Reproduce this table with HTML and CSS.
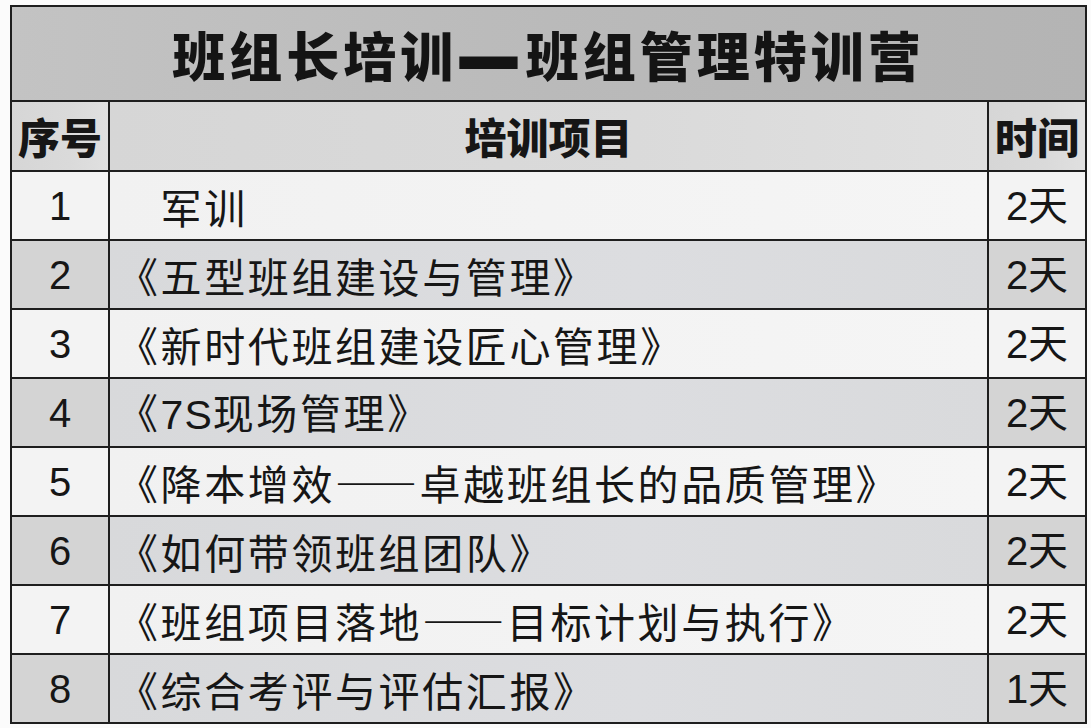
FILE: index.html
```html
<!DOCTYPE html>
<html lang="zh-CN">
<head>
<meta charset="utf-8">
<title>班组长培训—班组管理特训营</title>
<link rel="stylesheet" href="styles.css">
</head>
<body>
<table class="plan">
  <colgroup>
    <col class="c-no">
    <col class="c-item">
    <col class="c-time">
  </colgroup>
  <thead>
    <tr class="title-row"><th colspan="3" class="title">班组长培训<span class="dash">—</span>班组管理特训营</th></tr>
    <tr class="head-row">
      <th class="h-no">序号</th>
      <th class="h-item">培训项目</th>
      <th class="h-time">时间</th>
    </tr>
  </thead>
  <tbody>
    <tr class="light"><td class="no">1</td><td class="item">　军训</td><td class="time">2天</td></tr>
    <tr class="dark"><td class="no">2</td><td class="item">《五型班组建设与管理》</td><td class="time">2天</td></tr>
    <tr class="light"><td class="no">3</td><td class="item">《新时代班组建设匠心管理》</td><td class="time">2天</td></tr>
    <tr class="dark"><td class="no">4</td><td class="item">《<span class="latin">7S</span>现场管理》</td><td class="time">2天</td></tr>
    <tr class="light"><td class="no">5</td><td class="item">《降本增效——卓越班组长的品质管理》</td><td class="time">2天</td></tr>
    <tr class="dark"><td class="no">6</td><td class="item">《如何带领班组团队》</td><td class="time">2天</td></tr>
    <tr class="light"><td class="no">7</td><td class="item">《班组项目落地——目标计划与执行》</td><td class="time">2天</td></tr>
    <tr class="dark"><td class="no">8</td><td class="item">《综合考评与评估汇报》</td><td class="time">1天</td></tr>
  </tbody>
</table>
</body>
</html>
```

FILE: styles.css
```css
html, body {
  margin: 0;
  padding: 0;
  background: #fbfbfb;
}

body {
  padding: 5px 0 0 10px;
  font-family: "Liberation Sans", "Noto Sans CJK SC", sans-serif;
  color: #161616;
}

.plan {
  width: 1076px;
  border-collapse: collapse;
  table-layout: fixed;
  border: 2px solid #1e1e1e;
}

.c-no { width: 98px; }
.c-item { width: 879px; }
.c-time { width: 98px; }

.plan th,
.plan td {
  border: 2px solid #1e1e1e;
  padding: 0;
  vertical-align: middle;
  white-space: nowrap;
  overflow: hidden;
}

.title-row { height: 95px; }

.title {
  background: linear-gradient(90deg, #c3c3c3 0%, #bababa 50%, #b4b4b4 100%);
  font-family: "Noto Sans CJK SC", sans-serif;
  font-weight: 900;
  font-size: 53px;
  letter-spacing: 4px;
  line-height: 60px;
  text-align: center;
  color: #141414;
}

.dash {
  display: inline-block;
  transform: translateY(-7px) scale(1.35, 2.1);
  margin: 0 8px;
}

.head-row { height: 70px; }

.head-row th {
  background: linear-gradient(90deg, #d6d6d6 0%, #dadada 60%, #e0e0e0 100%);
  font-family: "Noto Sans CJK SC", sans-serif;
  font-weight: 900;
  font-size: 42px;
  line-height: 50px;
  text-align: center;
  color: #161616;
}

.plan tbody tr { height: 69px; }

.plan td {
  font-size: 40px;
  line-height: 48px;
}

.no, .time {
  text-align: center;
}

.plan td.item {
  text-align: left;
  padding-left: 7px;
  font-size: 41px;
  letter-spacing: 2.6px;
  font-family: "Noto Sans CJK SC", sans-serif;
  text-spacing-trim: space-all;
}

.latin {
  font-family: "Liberation Sans", sans-serif;
  letter-spacing: 1px;
}

.light td { background: #f3f3f3; }
.light .item { background: linear-gradient(90deg, #f1f1f1 0%, #f5f5f5 100%); }

.dark td { background: #d4d4d4; }
.dark .item { background: linear-gradient(90deg, #d8d9db 0%, #dcdde0 60%, #d9dadc 100%); }
```
